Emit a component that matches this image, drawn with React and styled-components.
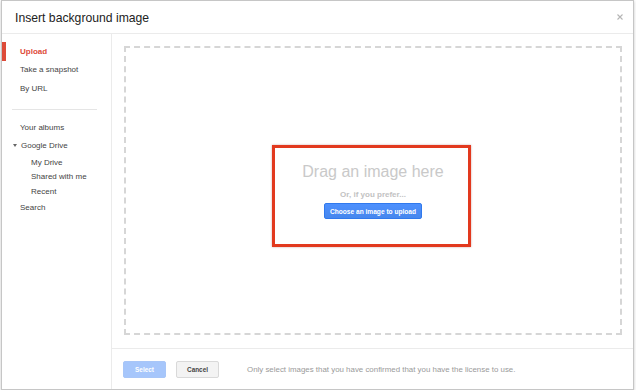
import React from "react";
import styled, { createGlobalStyle } from "styled-components";

const Global = createGlobalStyle`
  html, body { margin: 0; padding: 0; background: #fff; }
  body { font-family: "Liberation Sans", Arial, sans-serif; }
  * { box-sizing: border-box; }
`;

const Dialog = styled.div`
  margin-left: 1px;
  width: 633px;
  height: 390px;
  border: 1px solid #c6c6c6;
  box-shadow: 0 1px 3px rgba(0, 0, 0, 0.22);
  background: #fff;
  display: flex;
  flex-direction: column;
`;

const Header = styled.div`
  height: 33px;
  flex: none;
  border-bottom: 1px solid #ebebeb;
  display: flex;
  align-items: center;
  justify-content: space-between;
  padding: 0 9px 0 13px;
`;

const Title = styled.h1`
  margin: 0;
  font-size: 12.2px;
  font-weight: normal;
  color: #222;
  line-height: 16px;
  padding-top: 1px;
`;

const Close = styled.button`
  border: 0;
  background: none;
  padding: 0;
  width: 8px;
  height: 8px;
  display: flex;
  align-items: center;
  justify-content: center;
  cursor: pointer;
`;

const Body = styled.div`
  flex: 1;
  display: flex;
  min-height: 0;
`;

const Sidebar = styled.nav`
  width: 110px;
  flex: none;
  border-right: 1px solid #ebebeb;
  padding-top: 8px;
  display: flex;
  flex-direction: column;
`;

const NavItem = styled.div`
  height: ${(p) => (p.$sub ? "14.5px" : "18.5px")};
  display: flex;
  align-items: center;
  font-size: 8px;
  color: ${(p) => (p.$active ? "#dd4b39" : "#444")};
  font-weight: ${(p) => (p.$active ? "bold" : "normal")};
  border-left: 4px solid ${(p) => (p.$active ? "#dd4b39" : "transparent")};
  padding-left: ${(p) => (p.$sub ? "25px" : "14px")};
  white-space: nowrap;
`;

const Caret = styled.span`
  width: 0;
  height: 0;
  border-left: 2.5px solid transparent;
  border-right: 2.5px solid transparent;
  border-top: 3px solid #666;
  margin-left: -7px;
  margin-right: 4px;
`;

const Divider = styled.div`
  height: 1px;
  background: #e5e5e5;
  margin: 11.5px 0 8px 10px;
  width: 85px;
`;

const Main = styled.div`
  flex: 1;
  display: flex;
  flex-direction: column;
  min-width: 0;
`;

const DropArea = styled.div`
  flex: 1;
  padding: 12px 11px 13px 12px;
  display: flex;
`;

const DropZone = styled.div`
  flex: 1;
  position: relative;
  border: 2px dashed #d6d6d6;
  display: flex;
  flex-direction: column;
  align-items: center;
  justify-content: center;
  padding-top: 1px;
`;

const DragText = styled.div`
  font-size: 16px;
  line-height: 18px;
  color: #c9c9c9;
`;

const OrText = styled.div`
  margin-top: 9px;
  font-size: 8px;
  line-height: 10px;
  font-weight: bold;
  color: #c2c2c2;
`;

const ChooseButton = styled.button`
  margin-top: 3px;
  height: 16px;
  width: 98px;
  padding: 0;
  border: 1px solid #3079ed;
  border-radius: 2px;
  background: linear-gradient(#4d90fe, #4787ed);
  color: #fff;
  font-family: inherit;
  font-weight: bold;
  font-size: 6.6px;
`;

const Annotation = styled.div`
  position: absolute;
  left: 146px;
  top: 97px;
  width: 199px;
  height: 102px;
  border: 3.5px solid #e2391e;
  box-shadow: 0 0 2px rgba(120, 0, 0, 0.35);
  pointer-events: none;
`;

const Footer = styled.div`
  height: 41px;
  flex: none;
  border-top: 1px solid #ebebeb;
  display: flex;
  align-items: flex-start;
  padding: 12px 0 0 11px;
`;

const Btn = styled.button`
  height: 17px;
  width: 43px;
  margin-right: ${(p) => p.$gap};
  padding: 0;
  border-radius: 2px;
  font-family: inherit;
  font-weight: bold;
  font-size: 6.4px;
  border: 1px solid ${(p) => (p.$primary ? "#a8c6f8" : "#d9d9d9")};
  background: ${(p) => (p.$primary ? "#a6c6fb" : "#f3f3f3")};
  color: ${(p) => (p.$primary ? "#fff" : "#444")};
`;

const Notice = styled.div`
  height: 17px;
  display: flex;
  align-items: center;
  font-size: 7.9px;
  color: #9a9a9a;
  white-space: nowrap;
`;

export default function App() {
  return (
    <>
      <Global />
      <Dialog>
        <Header>
          <Title>Insert background image</Title>
          <Close aria-label="Close">
            <svg width="6" height="6" viewBox="0 0 6 6">
              <path d="M0.5 0.5L5.5 5.5M5.5 0.5L0.5 5.5" stroke="#b5b5b5" strokeWidth="1.1" />
            </svg>
          </Close>
        </Header>
        <Body>
          <Sidebar>
            <NavItem $active>Upload</NavItem>
            <NavItem>Take a snapshot</NavItem>
            <NavItem>By URL</NavItem>
            <Divider />
            <NavItem>Your albums</NavItem>
            <NavItem>
              <Caret />
              Google Drive
            </NavItem>
            <NavItem $sub>My Drive</NavItem>
            <NavItem $sub>Shared with me</NavItem>
            <NavItem $sub>Recent</NavItem>
            <NavItem>Search</NavItem>
          </Sidebar>
          <Main>
            <DropArea>
              <DropZone>
                <DragText>Drag an image here</DragText>
                <OrText>Or, if you prefer...</OrText>
                <ChooseButton>Choose an image to upload</ChooseButton>
                <Annotation />
              </DropZone>
            </DropArea>
            <Footer>
              <Btn $primary $gap="10px">Select</Btn>
              <Btn $gap="28px">Cancel</Btn>
              <Notice>Only select images that you have confirmed that you have the license to use.</Notice>
            </Footer>
          </Main>
        </Body>
      </Dialog>
    </>
  );
}
